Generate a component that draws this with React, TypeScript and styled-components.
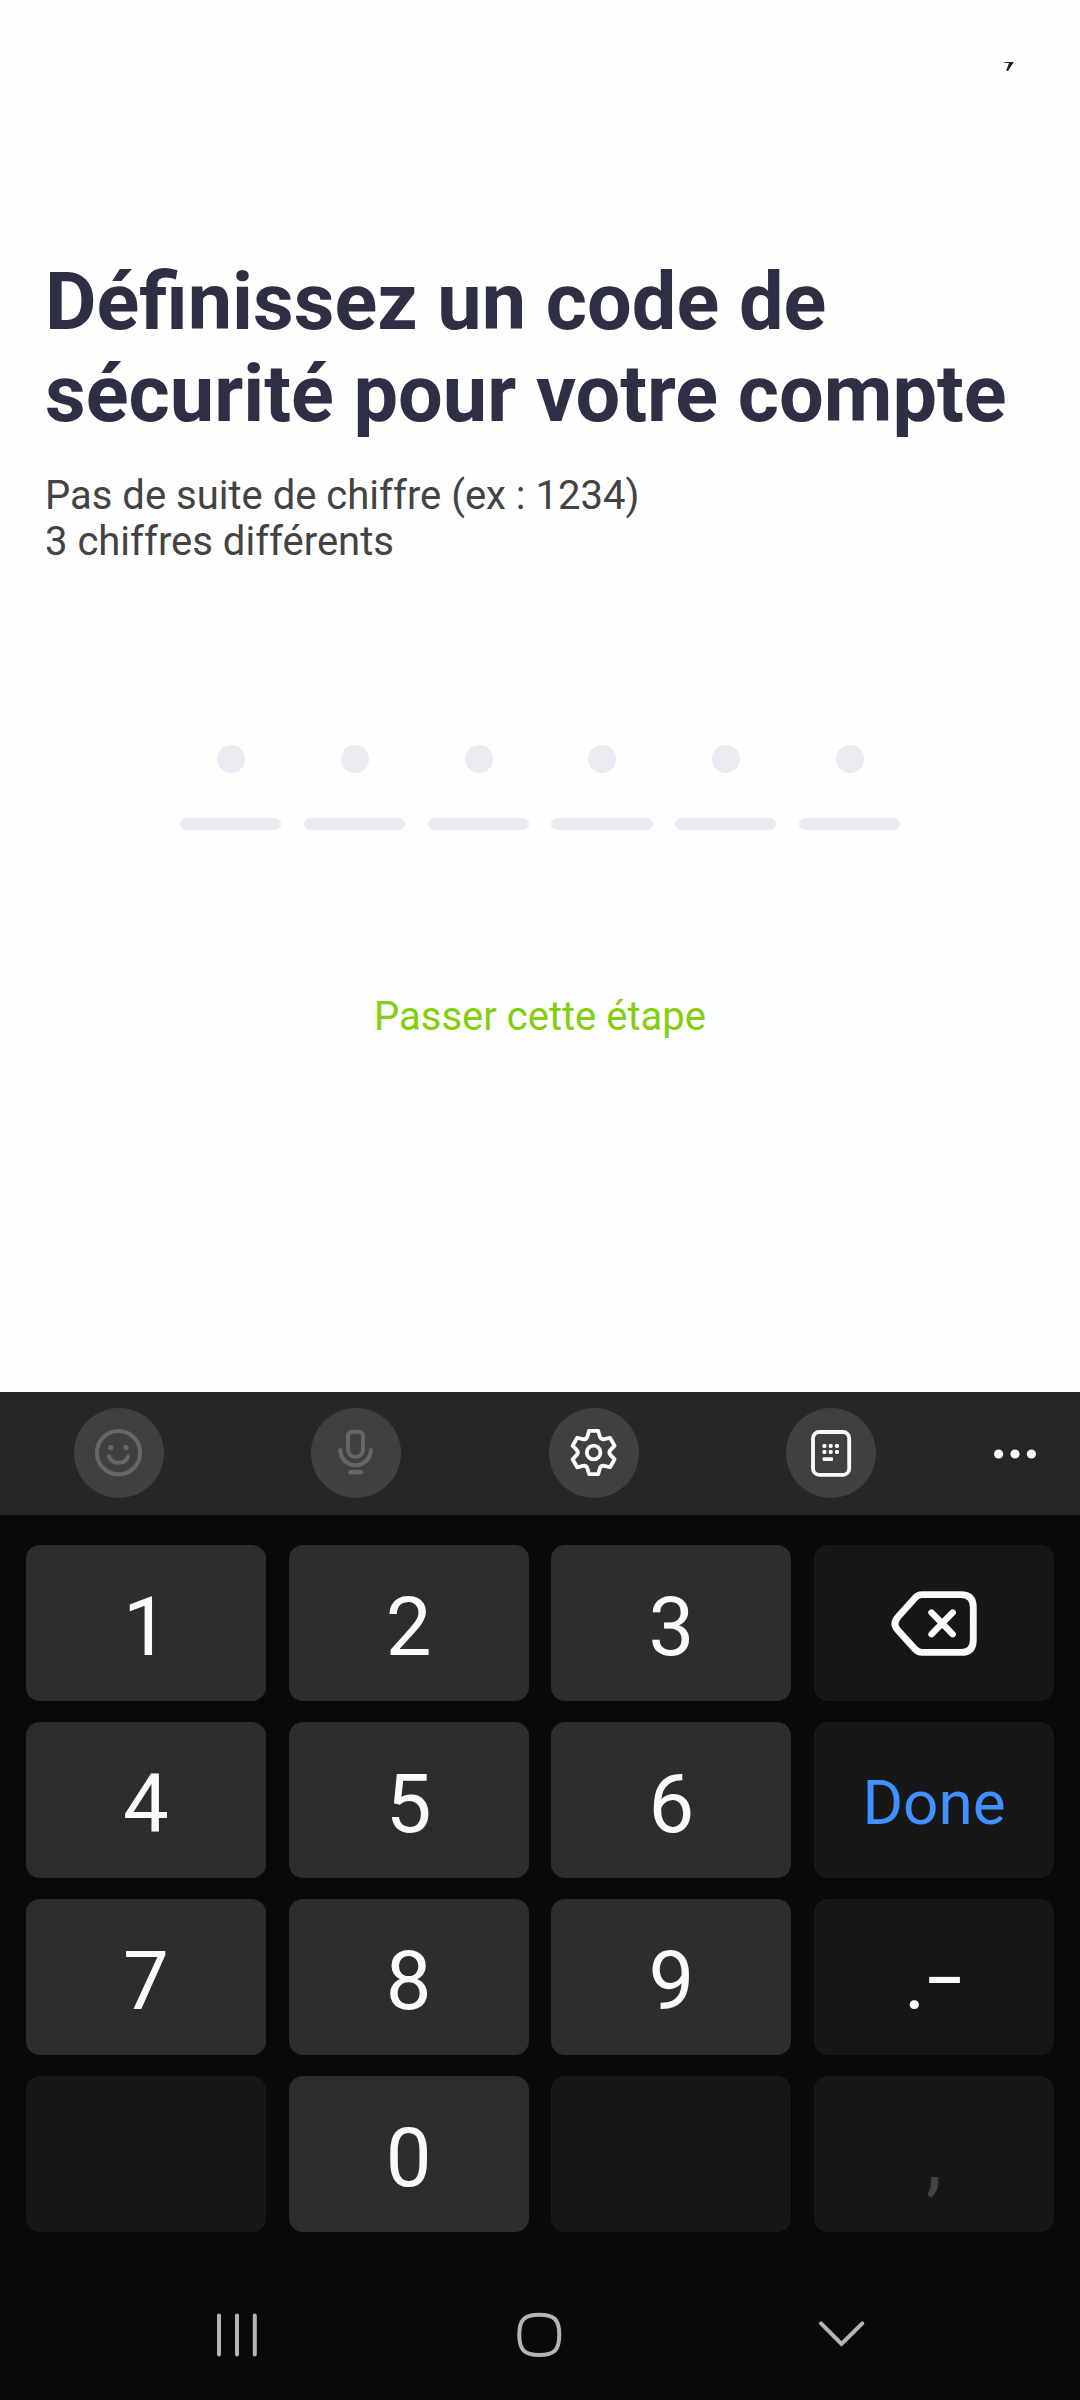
import React from "react";
import styled, { createGlobalStyle } from "styled-components";

const GlobalStyle = createGlobalStyle`
  *, *::before, *::after { box-sizing: border-box; }
  html, body { margin: 0; padding: 0; background: #fefefe; }
  body { font-family: Roboto, "Liberation Sans", sans-serif; }
`;

const Screen = styled.div`
  width: 1080px;
  height: 2400px;
  display: flex;
  flex-direction: column;
  background: #fefefe;
  overflow: hidden;
`;

const Content = styled.main`
  height: 1392px;
  display: flex;
  flex-direction: column;
`;

const StatusBar = styled.header`
  height: 256px;
  padding: 62px 65px 0 0;
  display: flex;
  justify-content: flex-end;
  align-items: flex-start;
`;

const Title = styled.h1`
  margin: 0;
  padding-left: 45px;
  height: 184px;
  font-size: 79.25px;
  line-height: 92px;
  font-weight: 700;
  color: #2e2e45;
  white-space: nowrap;
`;

const Rules = styled.p`
  margin: 33px 0 0;
  padding-left: 45px;
  height: 92px;
  font-size: 40px;
  line-height: 45.5px;
  color: #434343;
`;

const CodeRow = styled.div`
  margin-top: 180px;
  padding: 0 180px;
  display: flex;
  justify-content: space-between;
`;

const CodeCell = styled.div`
  width: 101.25px;
  height: 85px;
  display: flex;
  flex-direction: column;
  align-items: center;
  justify-content: space-between;
`;

const CodeDot = styled.span`
  width: 28px;
  height: 28px;
  margin-left: 1px;
  border-radius: 50%;
  background: #ebecf2;
`;

const CodeLine = styled.span`
  width: 100%;
  height: 12px;
  border-radius: 6px;
  background: #ebecf2;
`;

const SkipButton = styled.button`
  align-self: center;
  margin-top: 164px;
  padding: 0;
  border: 0;
  background: none;
  font-family: inherit;
  font-size: 40px;
  line-height: 46px;
  color: #83ce10;
`;

const Keyboard = styled.section`
  flex: 1;
  display: flex;
  flex-direction: column;
  background: #090909;
`;

const Toolbar = styled.div`
  height: 123px;
  padding: 16px 35px 0 74px;
  display: flex;
  justify-content: space-between;
  background: #262626;
`;

const ToolGroup = styled.div`
  display: flex;
  gap: 147.33px;
`;

const ToolButton = styled.button<{ $disabled?: boolean }>`
  width: 90px;
  height: 90px;
  padding: 0;
  border: 0;
  border-radius: 50%;
  display: flex;
  background: #404040;
  color: ${(p) => (p.$disabled ? "#676767" : "#fafafa")};
`;

const MoreButton = styled.button`
  width: 60px;
  height: 90px;
  padding: 0;
  border: 0;
  display: flex;
  background: none;
  color: #fafafa;
`;

const KeyGrid = styled.div`
  padding: 30px 26px 0;
  display: grid;
  grid-template-columns: repeat(4, 240px);
  grid-auto-rows: 156px;
  justify-content: space-between;
  row-gap: 21px;
`;

const Key = styled.button<{ $tone: "digit" | "side"; $kind?: string }>`
  padding: ${(p) => (p.$kind === "done" ? "5px 0 0" : "7px 0 0")};
  border: 0;
  border-radius: 14px;
  display: flex;
  align-items: center;
  justify-content: center;
  background: ${(p) => (p.$tone === "digit" ? "#2d2d2d" : "#171717")};
  color: ${(p) =>
    p.$kind === "done" ? "#3e91ff" : p.$kind === "muted" ? "#444444" : "#fafafa"};
  font-family: inherit;
  font-size: ${(p) => (p.$kind === "done" ? 62 : 81.5)}px;
  line-height: 96px;
`;

const IconKey = styled(Key)`
  padding: 0;
`;

const ShortDash = styled.span`
  margin: 0 -7.5px;
  transform: scaleX(0.77);
`;

const NavBar = styled.nav`
  margin-top: auto;
  height: 130px;
  display: flex;
  justify-content: space-between;
  padding: 35px 208px 0 207px;
  color: #b5b5b5;
`;

const StatusMark = () => (
  <svg width="12" height="11" viewBox="0 0 12 11" fill="#202020">
    <path d="M1 0H10.8L5 9L3.2 8.8L6 1L1 .7Z" />
  </svg>
);

const strokeProps = {
  fill: "none",
  stroke: "currentColor",
  strokeLinecap: "round" as const,
  strokeLinejoin: "round" as const,
};

const SmileIcon = () => (
  <svg width="90" height="90" viewBox="0 0 90 90" {...strokeProps} strokeWidth="4">
    <circle cx="44.5" cy="44.7" r="21.6" />
    <path d="M35 48.3C37 57 52 57 54 48.3" />
    <g fill="currentColor" stroke="none">
      <circle cx="36.8" cy="39.6" r="2.6" />
      <circle cx="52" cy="39.6" r="2.6" />
    </g>
  </svg>
);

const MicIcon = () => (
  <svg width="90" height="90" viewBox="0 0 90 90" {...strokeProps} strokeWidth="4">
    <path d="M42 23.8H47Q52 23.8 52 28.8V41.5A7.5 7.5 0 0 1 37 41.5V28.8Q37 23.8 42 23.8Z" />
    <path d="M29.3 42A15.2 15.2 0 0 0 59.7 42" />
    <path d="M39.4 64.2H50" strokeWidth="4.4" />
  </svg>
);

const GEAR =
  [0, 1, 2, 3, 4, 5]
    .map((k) => {
      const a = (k * Math.PI) / 3;
      const at = (x: number, y: number) =>
        `${(x * Math.cos(a) - y * Math.sin(a)).toFixed(2)} ${(
          x * Math.sin(a) +
          y * Math.cos(a)
        ).toFixed(2)}`;
      return `${k ? "L" : "M"}${at(-4.6, -21.6)}L${at(4.6, -21.6)}L${at(6.2, -16)}Q${at(7.3, -12.6)} ${at(10.8, -13.4)}`;
    })
    .join("") + "Z";

const GearIcon = () => (
  <svg width="90" height="90" viewBox="0 0 90 90" {...strokeProps} strokeWidth="3.8">
    <g transform="translate(44.6 44.5)">
      <path d={GEAR} />
      <circle r="6.8" />
    </g>
  </svg>
);

const KeypadIcon = () => (
  <svg width="90" height="90" viewBox="0 0 90 90" {...strokeProps} strokeWidth="3.8">
    <rect x="27" y="24" width="36.2" height="42.8" rx="6.2" />
    <g fill="currentColor" stroke="none">
      {[36.4, 42.7, 49].map((x) =>
        [36, 42].map((y) => (
          <rect key={`${x}-${y}`} x={x} y={y} width="4" height="4" rx="1.4" />
        ))
      )}
      <rect x="36.6" y="49.2" width="10.4" height="3.8" rx="1" />
    </g>
  </svg>
);

const MoreIcon = () => (
  <svg width="60" height="90" viewBox="0 0 60 90" fill="currentColor">
    <circle cx="13.6" cy="46" r="4.6" />
    <circle cx="30" cy="46" r="4.6" />
    <circle cx="46.4" cy="46" r="4.6" />
  </svg>
);

const BackspaceIcon = () => (
  <svg width="240" height="156" viewBox="0 0 240 156" {...strokeProps} strokeWidth="6.8">
    <path d="M108 49.7H146.8Q159.3 49.7 159.3 62.3V94.9Q159.3 107.4 146.8 107.4H108Q104 107.4 101 104.2L84.1 85.4Q77.8 78.5 84.1 71.8L101 52.9Q104 49.7 108 49.7Z" />
    <path d="M117.5 67.6L138.7 89.2M138.7 67.6L117.5 89.2" strokeWidth="6.4" />
  </svg>
);

const RecentsIcon = () => (
  <svg width="60" height="60" viewBox="0 0 60 60" {...strokeProps} strokeWidth="4">
    <path d="M12 10.4V49.4M30 10.4V49.4M47.8 10.4V49.4" />
  </svg>
);

const HomeIcon = () => (
  <svg width="60" height="60" viewBox="0 0 60 60" {...strokeProps} strokeWidth="4">
    <path d="M29.3 9.7C44.3 9.7 49.3 14.5 49.3 29.8S44.3 50 29.3 50S9.3 45 9.3 29.8S14.3 9.7 29.3 9.7Z" />
  </svg>
);

const HideIcon = () => (
  <svg width="60" height="60" viewBox="0 0 60 60" {...strokeProps} strokeWidth="4">
    <path d="M9 18.3L29.5 39L50.3 18.3" strokeLinejoin="miter" />
  </svg>
);

const App = () => (
  <>
    <GlobalStyle />
    <Screen>
      <Content>
        <StatusBar>
          <StatusMark />
        </StatusBar>
        <Title>
          Définissez un code de
          <br />
          sécurité pour votre compte
        </Title>
        <Rules>
          Pas de suite de chiffre (ex : 1234)
          <br />3 chiffres différents
        </Rules>
        <CodeRow>
          {Array.from({ length: 6 }, (_, i) => (
            <CodeCell key={i}>
              <CodeDot />
              <CodeLine />
            </CodeCell>
          ))}
        </CodeRow>
        <SkipButton>Passer cette étape</SkipButton>
      </Content>
      <Keyboard>
        <Toolbar>
          <ToolGroup>
            <ToolButton $disabled>
              <SmileIcon />
            </ToolButton>
            <ToolButton $disabled>
              <MicIcon />
            </ToolButton>
            <ToolButton>
              <GearIcon />
            </ToolButton>
            <ToolButton>
              <KeypadIcon />
            </ToolButton>
          </ToolGroup>
          <MoreButton>
            <MoreIcon />
          </MoreButton>
        </Toolbar>
        <KeyGrid>
          <Key $tone="digit">1</Key>
          <Key $tone="digit">2</Key>
          <Key $tone="digit">3</Key>
          <IconKey $tone="side">
            <BackspaceIcon />
          </IconKey>
          <Key $tone="digit">4</Key>
          <Key $tone="digit">5</Key>
          <Key $tone="digit">6</Key>
          <Key $tone="side" $kind="done">
            Done
          </Key>
          <Key $tone="digit">7</Key>
          <Key $tone="digit">8</Key>
          <Key $tone="digit">9</Key>
          <Key $tone="side">
            .<ShortDash>–</ShortDash>
          </Key>
          <Key $tone="side" />
          <Key $tone="digit">0</Key>
          <Key $tone="side" />
          <Key $tone="side" $kind="muted">
            ,
          </Key>
        </KeyGrid>
        <NavBar>
          <RecentsIcon />
          <HomeIcon />
          <HideIcon />
        </NavBar>
      </Keyboard>
    </Screen>
  </>
);

export default App;
